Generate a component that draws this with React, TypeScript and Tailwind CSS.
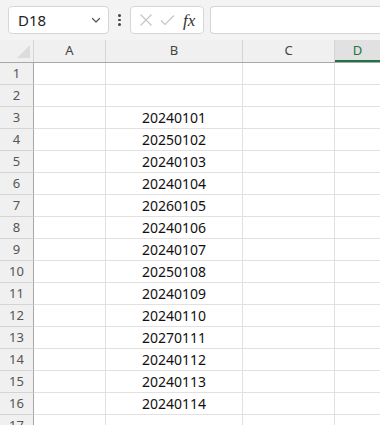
import React from "react";

const values: Record<number, string> = {
  3: "20240101",
  4: "20250102",
  5: "20240103",
  6: "20240104",
  7: "20260105",
  8: "20240106",
  9: "20240107",
  10: "20250108",
  11: "20240109",
  12: "20240110",
  13: "20270111",
  14: "20240112",
  15: "20240113",
  16: "20240114",
};

const rows = Array.from({ length: 17 }, (_, i) => i + 1);

export default function App() {
  return (
    <div
      className="w-[380px] h-[425px] overflow-hidden bg-white text-[#1f1f1f]"
      style={{ fontFamily: '"Noto Sans", "Open Sans", sans-serif' }}
    >
      {/* Formula bar */}
      <div className="flex h-[40px] items-center bg-[#f3f3f3] pl-[8px]">
        <div className="flex h-[28px] w-[101px] items-center justify-between rounded-[4px] border border-[#d6d6d6] bg-white pl-[9px] pr-[6px]">
          <span className="text-[15px] leading-none text-[#242424]">D18</span>
          <svg width="12" height="12" viewBox="0 0 12 12" fill="none">
            <path d="M2.5 4.5 6 8 9.5 4.5" stroke="#555" strokeWidth="1.2" strokeLinecap="round" strokeLinejoin="round" />
          </svg>
        </div>
        <div className="flex w-[21px] flex-col items-center gap-[2px]">
          <span className="h-[2.5px] w-[2.5px] rounded-full bg-[#444]" />
          <span className="h-[2.5px] w-[2.5px] rounded-full bg-[#444]" />
          <span className="h-[2.5px] w-[2.5px] rounded-full bg-[#444]" />
        </div>
        <div className="flex h-[28px] w-[74px] items-center rounded-[4px] border border-[#d6d6d6] bg-white pl-[8px]">
          <svg width="14" height="14" viewBox="0 0 14 14" fill="none">
            <path d="M1.5 1.5 12.5 12.5M12.5 1.5 1.5 12.5" stroke="#c4c4c4" strokeWidth="1.1" />
          </svg>
          <svg className="ml-[7px]" width="15" height="14" viewBox="0 0 15 14" fill="none">
            <path d="M1 7.5 5 11.5 14 2.5" stroke="#c4c4c4" strokeWidth="1.1" />
          </svg>
          <span
            className="ml-[8px] text-[17px] italic leading-none text-[#333]"
            style={{ fontFamily: '"Liberation Serif", serif' }}
          >
            fx
          </span>
        </div>
        <div className="ml-[6px] h-[28px] flex-1 rounded-l-[4px] border border-r-0 border-[#d6d6d6] bg-white" />
      </div>

      {/* Column headers */}
      <div className="flex h-[23px] border-b border-[#a8a8a8] bg-[#f0f0f0] text-[13px] text-[#444]">
        <div className="relative w-[34px] border-r border-[#d4d4d4]">
          <svg className="absolute bottom-[4px] right-[3px]" width="13" height="13" viewBox="0 0 13 13">
            <path d="M13 0 13 13 0 13Z" fill="#dcdcdc" />
          </svg>
        </div>
        <div className="flex w-[72px] items-center justify-center border-r border-[#d4d4d4]">A</div>
        <div className="flex w-[137px] items-center justify-center border-r border-[#d4d4d4]">B</div>
        <div className="flex w-[92px] items-center justify-center border-r border-[#d4d4d4]">C</div>
        <div className="flex flex-1 items-center justify-center border-b-[2px] border-[#217346] bg-[#e1e1e1] pt-[2px] text-[#217346]">
          D
        </div>
      </div>

      {/* Rows */}
      {rows.map((r) => (
        <div key={r} className="flex h-[22px] text-[14px]">
          <div className="flex w-[34px] items-center justify-center border-r border-b border-r-[#a8a8a8] border-b-[#d4d4d4] bg-[#f0f0f0] text-[13px] text-[#555]">
            {r}
          </div>
          <div className="w-[72px] border-r border-b border-[#e1e1e1]" />
          <div className="flex w-[137px] items-center justify-center border-r border-b border-[#e1e1e1] text-[#111]">
            {values[r] ?? ""}
          </div>
          <div className="w-[92px] border-r border-b border-[#e1e1e1]" />
          <div className="flex-1 border-b border-[#e1e1e1]" />
        </div>
      ))}
    </div>
  );
}
